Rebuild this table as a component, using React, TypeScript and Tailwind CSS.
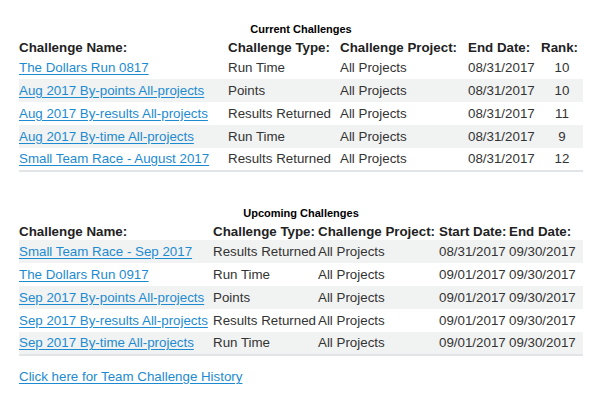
const current = [
  { name: "The Dollars Run 0817", type: "Run Time", project: "All Projects", end: "08/31/2017", rank: 10 },
  { name: "Aug 2017 By-points All-projects", type: "Points", project: "All Projects", end: "08/31/2017", rank: 10 },
  { name: "Aug 2017 By-results All-projects", type: "Results Returned", project: "All Projects", end: "08/31/2017", rank: 11 },
  { name: "Aug 2017 By-time All-projects", type: "Run Time", project: "All Projects", end: "08/31/2017", rank: 9 },
  { name: "Small Team Race - August 2017", type: "Results Returned", project: "All Projects", end: "08/31/2017", rank: 12 },
];

const upcoming = [
  { name: "Small Team Race - Sep 2017", type: "Results Returned", project: "All Projects", start: "08/31/2017", end: "09/30/2017" },
  { name: "The Dollars Run 0917", type: "Run Time", project: "All Projects", start: "09/01/2017", end: "09/30/2017" },
  { name: "Sep 2017 By-points All-projects", type: "Points", project: "All Projects", start: "09/01/2017", end: "09/30/2017" },
  { name: "Sep 2017 By-results All-projects", type: "Results Returned", project: "All Projects", start: "09/01/2017", end: "09/30/2017" },
  { name: "Sep 2017 By-time All-projects", type: "Run Time", project: "All Projects", start: "09/01/2017", end: "09/30/2017" },
];

const link = "text-[#1d8bd1] underline underline-offset-2";

export default function App() {
  return (
    <main
      className="min-h-screen bg-white text-[13.33px] text-[#333] pl-[19px] pt-[23px]"
      style={{ fontFamily: '"Liberation Sans", Arial, sans-serif' }}
    >
      {/* Current */}
      <table className="table-fixed w-[564px] border-collapse">
        <caption className="text-[11px] leading-[13px] font-bold text-black pb-[4px]">Current Challenges</caption>
        <colgroup>
          <col className="w-[209px]" />
          <col className="w-[112px]" />
          <col className="w-[128px]" />
          <col className="w-[73px]" />
          <col className="w-[42px]" />
        </colgroup>
        <thead>
          <tr className="h-[16px] leading-[16px] font-bold text-[#222] text-left">
            <th className="p-0">Challenge Name:</th>
            <th className="p-0">Challenge Type:</th>
            <th className="p-0">Challenge Project:</th>
            <th className="p-0">End Date:</th>
            <th className="p-0">Rank:</th>
          </tr>
        </thead>
        <tbody className="border-b-2 border-[#e1e5e8]">
          {current.map((r, i) => (
            <tr key={i} className={`h-[23px] ${i % 2 === 1 ? "bg-[#f1f2f2]" : ""}`}>
              <td className="p-0 whitespace-nowrap"><a href="#" className={link}>{r.name}</a></td>
              <td className="p-0 whitespace-nowrap">{r.type}</td>
              <td className="p-0 whitespace-nowrap">{r.project}</td>
              <td className="p-0 whitespace-nowrap">{r.end}</td>
              <td className="p-0 text-center">{r.rank}</td>
            </tr>
          ))}
        </tbody>
      </table>

      {/* Upcoming */}
      <table className="table-fixed w-[564px] border-collapse mt-[35px]">
        <caption className="text-[11px] leading-[13px] font-bold text-black pb-[4px]">Upcoming Challenges</caption>
        <colgroup>
          <col className="w-[194px]" />
          <col className="w-[105px]" />
          <col className="w-[121px]" />
          <col className="w-[70px]" />
          <col className="w-[74px]" />
        </colgroup>
        <thead>
          <tr className="h-[16px] leading-[16px] font-bold text-[#222] text-left">
            <th className="p-0 whitespace-nowrap">Challenge Name:</th>
            <th className="p-0 whitespace-nowrap">Challenge Type:</th>
            <th className="p-0 whitespace-nowrap">Challenge Project:</th>
            <th className="p-0 whitespace-nowrap">Start Date:</th>
            <th className="p-0 whitespace-nowrap">End Date:</th>
          </tr>
        </thead>
        <tbody className="border-b-2 border-[#e1e5e8]">
          {upcoming.map((r, i) => (
            <tr key={i} className={`h-[23px] ${i % 2 === 0 ? "bg-[#f1f2f2]" : ""}`}>
              <td className="p-0 whitespace-nowrap"><a href="#" className={link}>{r.name}</a></td>
              <td className="p-0 whitespace-nowrap">{r.type}</td>
              <td className="p-0 whitespace-nowrap">{r.project}</td>
              <td className="p-0 whitespace-nowrap">{r.start}</td>
              <td className="p-0 whitespace-nowrap">{r.end}</td>
            </tr>
          ))}
        </tbody>
      </table>

      <div className="mt-[13px] leading-[16px]">
        <a href="#" className={link}>Click here for Team Challenge History</a>
      </div>
    </main>
  );
}
